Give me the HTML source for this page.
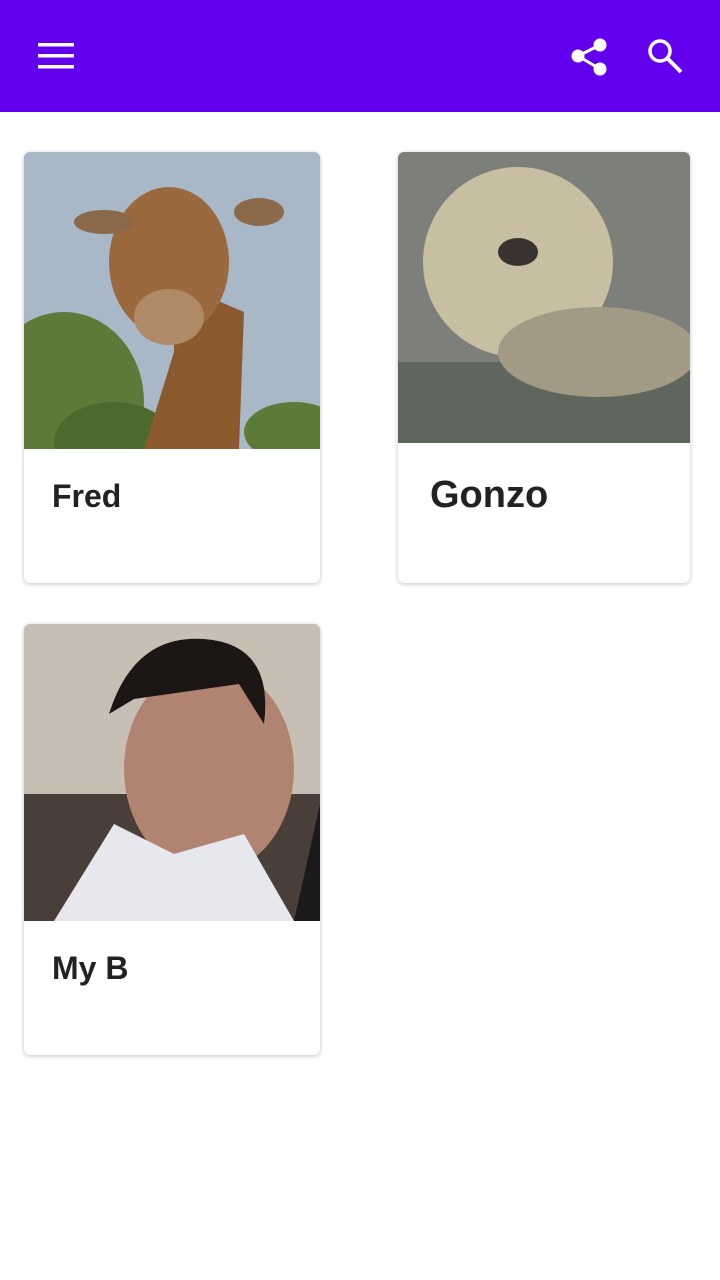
<!DOCTYPE html>
<html><head><meta charset="utf-8"><style>
body{margin:0;width:720px;height:1280px;background:#fff;font-family:"Liberation Sans",sans-serif;position:relative;overflow:hidden}
.bar{position:absolute;left:0;top:0;width:720px;height:112px;background:#6200ee}
.card{position:absolute;background:#fff;border-radius:6px;box-shadow:0 1px 4px rgba(0,0,0,.25);overflow:hidden}
.img{position:absolute;left:0;top:0}
.t{position:absolute;color:#222;font-weight:bold}
</style></head><body>
<div class="bar">
<svg width="720" height="112" style="position:absolute;left:0;top:0">
<rect x="38" y="43" width="36" height="3.5" fill="#fff"/><rect x="38" y="54" width="36" height="3.5" fill="#fff"/><rect x="38" y="65" width="36" height="3.5" fill="#fff"/>
<g fill="#fff"><circle cx="600" cy="45" r="6.5"/><circle cx="578" cy="56" r="6.5"/><circle cx="600" cy="69" r="6.5"/></g>
<path d="M600 45L578 56L600 69" stroke="#fff" stroke-width="3" fill="none"/>
<circle cx="660" cy="51" r="10" stroke="#fff" stroke-width="3.5" fill="none"/>
<path d="M667 58L681 72" stroke="#fff" stroke-width="4"/>
</svg></div>

<div class="card" style="left:24px;top:152px;width:296px;height:431px">
<svg class="img" width="298" height="297">
<rect width="298" height="297" fill="#a9b8c6"/>
<ellipse cx="40" cy="250" rx="80" ry="90" fill="#5d7a38"/>
<ellipse cx="90" cy="290" rx="60" ry="40" fill="#4d6a2e"/>
<ellipse cx="270" cy="280" rx="50" ry="30" fill="#5d7a38"/>
<path d="M150 130 L220 160 L215 297 L120 297 L150 200Z" fill="#8a5a2e"/>
<ellipse cx="145" cy="110" rx="60" ry="75" fill="#9a6a3e"/>
<ellipse cx="145" cy="165" rx="35" ry="28" fill="#b08a68"/>
<ellipse cx="80" cy="70" rx="30" ry="12" fill="#8a6a4a"/><ellipse cx="235" cy="60" rx="25" ry="14" fill="#8a6a4a"/>
</svg>
<div class="t" style="left:28px;top:326px;font-size:32px">Fred</div>
</div>

<div class="card" style="left:398px;top:152px;width:292px;height:431px">
<svg class="img" width="292" height="291">
<rect width="292" height="291" fill="#7d807a"/>
<rect y="210" width="292" height="81" fill="#5f665e"/>
<ellipse cx="120" cy="110" rx="95" ry="95" fill="#c8bea2"/>
<ellipse cx="200" cy="200" rx="100" ry="45" fill="#a39a86"/>
<ellipse cx="120" cy="100" rx="20" ry="14" fill="#3a3230"/>
</svg>
<div class="t" style="left:32px;top:322px;font-size:38px">Gonzo</div>
</div>

<div class="card" style="left:24px;top:624px;width:296px;height:431px">
<svg class="img" width="296" height="297">
<rect width="296" height="297" fill="#c8bfb4"/>
<rect y="170" width="296" height="127" fill="#4a3e38"/>
<ellipse cx="185" cy="145" rx="85" ry="105" fill="#b08470"/>
<path d="M85 90 Q110 10 180 15 Q250 20 240 100 L215 60 L110 75Z" fill="#1c1614"/>
<path d="M30 297 L90 200 L150 230 L220 210 L270 297Z" fill="#e6e8ee"/>
<path d="M270 297 L296 180 L296 297Z" fill="#1a1a1a"/>
</svg>
<div class="t" style="left:28px;top:326px;font-size:32px">My B</div>
</div>
</body></html>
